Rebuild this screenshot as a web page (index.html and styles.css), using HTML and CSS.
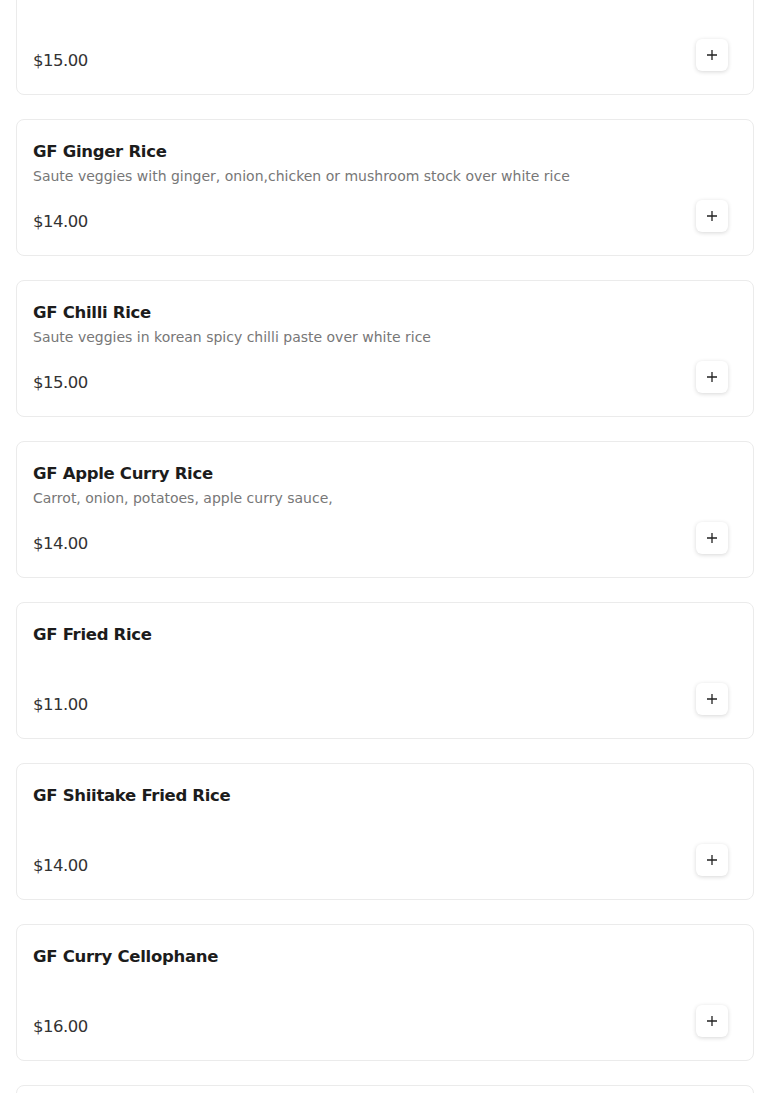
FILE: index.html
```html
<!DOCTYPE html>
<html>
<head>
<meta charset="utf-8">
<link rel="stylesheet" href="styles.css">
</head>
<body>
<div class="menu">
  <div class="card">
    <div class="name"></div>
    <div class="desc"></div>
    <div class="foot"><span class="price">$15.00</span><button class="add"><svg viewBox="0 0 12 12" width="12" height="12"><path d="M6 1v10M1 6h10" stroke="#222" stroke-width="1.3"/></svg></button></div>
  </div>
  <div class="card">
    <div class="name">GF Ginger Rice</div>
    <div class="desc">Saute veggies with ginger, onion,chicken or mushroom stock over white rice</div>
    <div class="foot"><span class="price">$14.00</span><button class="add"><svg viewBox="0 0 12 12" width="12" height="12"><path d="M6 1v10M1 6h10" stroke="#222" stroke-width="1.3"/></svg></button></div>
  </div>
  <div class="card">
    <div class="name">GF Chilli Rice</div>
    <div class="desc">Saute veggies in korean spicy chilli paste over white rice</div>
    <div class="foot"><span class="price">$15.00</span><button class="add"><svg viewBox="0 0 12 12" width="12" height="12"><path d="M6 1v10M1 6h10" stroke="#222" stroke-width="1.3"/></svg></button></div>
  </div>
  <div class="card">
    <div class="name">GF Apple Curry Rice</div>
    <div class="desc">Carrot, onion, potatoes, apple curry sauce,</div>
    <div class="foot"><span class="price">$14.00</span><button class="add"><svg viewBox="0 0 12 12" width="12" height="12"><path d="M6 1v10M1 6h10" stroke="#222" stroke-width="1.3"/></svg></button></div>
  </div>
  <div class="card">
    <div class="name">GF Fried Rice</div>
    <div class="desc"></div>
    <div class="foot"><span class="price">$11.00</span><button class="add"><svg viewBox="0 0 12 12" width="12" height="12"><path d="M6 1v10M1 6h10" stroke="#222" stroke-width="1.3"/></svg></button></div>
  </div>
  <div class="card">
    <div class="name">GF Shiitake Fried Rice</div>
    <div class="desc"></div>
    <div class="foot"><span class="price">$14.00</span><button class="add"><svg viewBox="0 0 12 12" width="12" height="12"><path d="M6 1v10M1 6h10" stroke="#222" stroke-width="1.3"/></svg></button></div>
  </div>
  <div class="card">
    <div class="name">GF Curry Cellophane</div>
    <div class="desc"></div>
    <div class="foot"><span class="price">$16.00</span><button class="add"><svg viewBox="0 0 12 12" width="12" height="12"><path d="M6 1v10M1 6h10" stroke="#222" stroke-width="1.3"/></svg></button></div>
  </div>
  <div class="card"></div>
</div>
</body>
</html>
```
FILE: styles.css
```css
html, body {
  margin: 0;
  padding: 0;
  background: #fff;
  font-family: "DejaVu Sans", "Noto Sans", sans-serif;
  overflow: hidden;
}
.menu {
  display: flex;
  flex-direction: column;
  gap: 24px;
  padding: 0 16px;
  margin-top: -42px;
}
.card {
  box-sizing: border-box;
  height: 137px;
  flex-shrink: 0;
  border: 1px solid #ebebeb;
  border-radius: 8px;
  padding: 21px 25px 23px 16px;
  display: flex;
  flex-direction: column;
}
.name {
  min-height: 22px;
  font-size: 16.5px;
  font-weight: bold;
  line-height: 22px;
  letter-spacing: -0.3px;
  color: #1c1c1c;
}
.desc {
  margin-top: 2px;
  min-height: 22px;
  font-size: 14px;
  line-height: 22px;
  color: #777;
}
.foot {
  margin-top: auto;
  display: flex;
  justify-content: space-between;
  align-items: flex-end;
}
.price {
  margin-bottom: -1px;
  font-size: 16.5px;
  line-height: 22px;
  letter-spacing: -0.5px;
  color: #333;
}
.add {
  width: 32px;
  height: 32px;
  padding: 0;
  border: none;
  border-radius: 6px;
  background: #fff;
  box-shadow: 0 1px 4px rgba(0,0,0,0.16);
  display: flex;
  align-items: center;
  justify-content: center;
}
.add svg { display: block; }
```
